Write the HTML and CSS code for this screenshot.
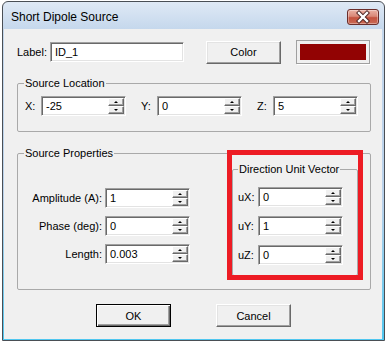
FILE: index.html
```html
<!DOCTYPE html>
<html lang="en">
<head>
    <meta charset="UTF-8">
    <meta name="viewport" content="width=device-width, initial-scale=1.0">
    <link rel="stylesheet" href="styles.css">
</head>
<body>

    <div class="window">
        <div class="titlebar">
            <span class="title">Short Dipole Source</span>
            <div class="close-btn">
                <svg width="30" height="14" viewBox="0 0 30 14">
                    <path d="M11 3 L19 11 M19 3 L11 11" stroke="#4a2020" stroke-width="4.2" stroke-linecap="square"/>
                    <path d="M11 3 L19 11 M19 3 L11 11" stroke="#ffffff" stroke-width="2.4" stroke-linecap="square"/>
                </svg>
            </div>
        </div>

        <div class="client">
            <div class="label-row">
                <span class="label-text">Label:</span>
                <div class="textbox wide"><span class="value">ID_1</span></div>
                <div class="btn color-btn">Color</div>
                <div class="swatch"><div class="swatch-fill"></div></div>
            </div>

            <fieldset class="group location">
                <legend>Source Location</legend>
                <div class="axis-row">
                    <div class="pair">
                        <span class="axis-label">X:</span>
                        <div class="textbox spin-box"><span class="value">-25</span><div class="spin"><div class="spin-btn"><i class="up"></i></div><div class="spin-btn"><i class="down"></i></div></div></div>
                    </div>
                    <div class="pair">
                        <span class="axis-label">Y:</span>
                        <div class="textbox spin-box"><span class="value">0</span><div class="spin"><div class="spin-btn"><i class="up"></i></div><div class="spin-btn"><i class="down"></i></div></div></div>
                    </div>
                    <div class="pair">
                        <span class="axis-label">Z:</span>
                        <div class="textbox spin-box"><span class="value">5</span><div class="spin"><div class="spin-btn"><i class="up"></i></div><div class="spin-btn"><i class="down"></i></div></div></div>
                    </div>
                </div>
            </fieldset>

            <fieldset class="group properties">
                <legend>Source Properties</legend>
                <div class="props-body">
                    <div class="props-left">
                        <div class="prop-row">
                            <span class="prop-label">Amplitude (A):</span>
                            <div class="textbox spin-box"><span class="value">1</span><div class="spin"><div class="spin-btn"><i class="up"></i></div><div class="spin-btn"><i class="down"></i></div></div></div>
                        </div>
                        <div class="prop-row">
                            <span class="prop-label">Phase (deg):</span>
                            <div class="textbox spin-box"><span class="value">0</span><div class="spin"><div class="spin-btn"><i class="up"></i></div><div class="spin-btn"><i class="down"></i></div></div></div>
                        </div>
                        <div class="prop-row">
                            <span class="prop-label">Length:</span>
                            <div class="textbox spin-box"><span class="value">0.003</span><div class="spin"><div class="spin-btn"><i class="up"></i></div><div class="spin-btn"><i class="down"></i></div></div></div>
                        </div>
                    </div>

                    <fieldset class="group direction">
                        <legend>Direction Unit Vector</legend>
                        <div class="dir-rows">
                            <div class="dir-row">
                                <span class="dir-label">uX:</span>
                                <div class="textbox spin-box"><span class="value">0</span><div class="spin"><div class="spin-btn"><i class="up"></i></div><div class="spin-btn"><i class="down"></i></div></div></div>
                            </div>
                            <div class="dir-row">
                                <span class="dir-label">uY:</span>
                                <div class="textbox spin-box"><span class="value">1</span><div class="spin"><div class="spin-btn"><i class="up"></i></div><div class="spin-btn"><i class="down"></i></div></div></div>
                            </div>
                            <div class="dir-row">
                                <span class="dir-label">uZ:</span>
                                <div class="textbox spin-box"><span class="value">0</span><div class="spin"><div class="spin-btn"><i class="up"></i></div><div class="spin-btn"><i class="down"></i></div></div></div>
                            </div>
                        </div>
                    </fieldset>
                </div>
            </fieldset>

            <div class="buttons">
                <div class="btn default-btn">OK</div>
                <div class="btn">Cancel</div>
            </div>

            <!-- annotation box drawn over the dialog -->
            <div class="highlight"></div>
        </div>
    </div>

</body>
</html>
```

FILE: styles.css
```css
body {
    margin: 0;
    background-color: #ffffff;
    font-family: 'Liberation Sans', Arial, sans-serif;
    font-size: 11px;
    color: #000;
}

.window {
    box-sizing: border-box;
    width: 383px;
    height: 340px;
    margin: 1px 0 0 2px;
    padding: 0 2px 1px 1px;
    border: 1px solid #4a4f55;
    border-radius: 6px 6px 0 0;
    background: linear-gradient(#dfe9f5 0px, #c4d7ec 28px, #b9d1ea 60%, #4fc6ef 100%);
}

.titlebar {
    display: flex;
    justify-content: space-between;
    align-items: flex-start;
    height: 27px;
    padding-left: 7px;
}

.title {
    margin-top: 8px;
    font-size: 12px;
    line-height: 14px;
}

.close-btn {
    box-sizing: border-box;
    width: 32px;
    height: 16px;
    margin: 7px 3px 0 0;
    border: 1px solid #6b2e2b;
    border-radius: 3px;
    background: linear-gradient(#eab1a4 0%, #d98878 45%, #c4523f 55%, #c96a55 100%);
    box-shadow: inset 0 0 0 1px rgba(255, 255, 255, 0.35);
    display: flex;
    align-items: center;
    justify-content: center;
}

.client {
    position: relative;
    height: 310px;
    background-color: #f0f0f0;
}

/* label row */
.label-row {
    display: flex;
    align-items: center;
    height: 24px;
    padding: 11px 0 0 13px;
}

.label-text {
    width: 33px;
}

.textbox {
    box-sizing: border-box;
    height: 20px;
    display: flex;
    align-items: center;
    padding: 1px 1px 1px 4px;
    background-color: #fff;
    border: 1px solid;
    border-color: #a0a0a0 #ffffff #ffffff #a0a0a0;
    box-shadow: inset 1px 1px 0 #696969, inset -1px -1px 0 #e3e3e3;
}

.textbox.wide {
    width: 134px;
}

.spin-box {
    width: 85px;
}

.value {
    flex: 1;
    line-height: 14px;
}

.spin {
    align-self: stretch;
    width: 16px;
    display: flex;
    flex-direction: column;
}

.spin-btn {
    box-sizing: border-box;
    flex: 1;
    display: flex;
    align-items: center;
    justify-content: center;
    background-color: #f0f0f0;
    border: 1px solid;
    border-color: #ffffff #696969 #696969 #ffffff;
    box-shadow: inset -1px -1px 0 #a0a0a0;
}

.spin-btn i {
    width: 0;
    height: 0;
    border-left: 2px solid transparent;
    border-right: 2px solid transparent;
}

.spin-btn .up {
    border-bottom: 2px solid #000;
}

.spin-btn .down {
    border-top: 2px solid #000;
}

.btn {
    box-sizing: border-box;
    width: 75px;
    height: 23px;
    display: flex;
    align-items: center;
    justify-content: center;
    background-color: #f0f0f0;
    border: 1px solid;
    border-color: #ffffff #696969 #696969 #ffffff;
    box-shadow: inset -1px -1px 0 #a0a0a0, inset 1px 1px 0 #e3e3e3;
}

.color-btn {
    margin-left: 22px;
}

.default-btn {
    border: 1px solid #000;
    box-shadow: inset 1px 1px 0 #ffffff, inset -1px -1px 0 #696969, inset -2px -2px 0 #a0a0a0;
}

.swatch {
    box-sizing: border-box;
    width: 74px;
    height: 24px;
    margin-left: 15px;
    padding: 3px;
    border: 1px solid #a0a0a0;
    box-shadow: 1px 1px 0 #ffffff;
}

.swatch-fill {
    height: 100%;
    background-color: #920303;
}

/* group boxes */
.group {
    box-sizing: border-box;
    min-width: 0;
    margin: 0;
    border: 1px solid #a9a9a9;
    border-radius: 2px;
}

.group legend {
    padding: 0 1px;
    line-height: 14px;
}

.location {
    width: 354px;
    margin: 12px 0 0 13px;
    padding: 6px 10px 15px 6px;
}

.axis-row {
    display: flex;
    gap: 14px;
}

.pair {
    display: flex;
    align-items: center;
}

.axis-label {
    width: 17px;
    padding-left: 1px;
    box-sizing: border-box;
}

.properties {
    width: 354px;
    margin: 14px 0 0 13px;
    padding: 2px 12px 13px 6px;
}

.props-body {
    display: flex;
    align-items: flex-start;
}

.props-left {
    width: 166px;
    padding-top: 26px;
    display: flex;
    flex-direction: column;
    gap: 8px;
}

.prop-row,
.dir-row {
    display: flex;
    align-items: center;
}

.prop-label {
    width: 81px;
    padding-right: 3px;
    box-sizing: border-box;
    text-align: right;
}

.direction {
    width: 126px;
    margin-left: 42px;
    padding: 11px 14px 10px 5px;
}

.dir-rows {
    display: flex;
    flex-direction: column;
    gap: 9px;
}

.dir-label {
    width: 20px;
}

.buttons {
    display: flex;
    gap: 45px;
    margin-top: 14px;
    padding-left: 92px;
}

.highlight {
    position: absolute;
    left: 223px;
    top: 121px;
    width: 136px;
    height: 130px;
    box-sizing: border-box;
    border: 5px solid #ed1c24;
}
```
